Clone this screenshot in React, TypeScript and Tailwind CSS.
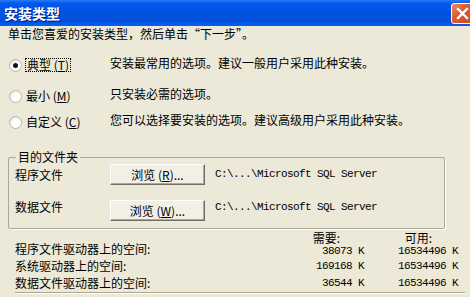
import React from "react";

function Radio({ checked }: { checked?: boolean }) {
  return (
    <div className="w-[13px] h-[13px] rounded-full border border-[#B8B8B0] bg-[radial-gradient(circle_at_65%_65%,#ffffff_40%,#DCDCD4_100%)] flex items-center justify-center shrink-0">
      {checked && <div className="w-[5px] h-[5px] rounded-full bg-[#111]" />}
    </div>
  );
}

function Btn({ children }: { children: React.ReactNode }) {
  return (
    <div className="w-[95px] h-[21px] shrink-0 border border-t-white border-l-white border-r-[#716F64] border-b-[#716F64] shadow-[inset_-1px_-1px_0_#ACA899] bg-[#F1EFE6] flex items-center justify-center text-[12px] leading-[14px]">
      {children}
    </div>
  );
}

export default function App() {
  const cjk = "font-['Noto_Sans_CJK_SC',sans-serif]";
  const mono = "font-['Liberation_Mono',monospace] text-[11px] tracking-[-0.6px]";
  return (
    <div className={`w-[470px] h-[297px] overflow-hidden bg-[#ECE9D8] text-black ${cjk} text-[12px]`}>
      {/* Title bar */}
      <div className="h-[26px] flex items-center bg-[linear-gradient(to_bottom,#2C7BF8_0%,#0058EE_12%,#0053E1_50%,#004FD8_82%,#0058EC_90%,#0064F6_100%)]">
        <div className="pl-[4px] text-white font-bold text-[14px] leading-[16px] [text-shadow:1px_1px_0_#0A1883]">
          安装类型
        </div>
        <div className="ml-auto mr-[-3px] w-[22px] h-[21px] rounded-[3px] border border-white bg-[linear-gradient(135deg,#F08A6A_0%,#E0552C_45%,#D24A20_100%)] flex items-center justify-center">
          <svg width="13" height="13" viewBox="0 0 13 13">
            <path d="M2 2 L11 11 M11 2 L2 11" stroke="white" strokeWidth="2.4" strokeLinecap="square" />
          </svg>
        </div>
      </div>

      {/* Instruction */}
      <div className="pl-[8px] leading-[14px] mt-[1px]">
        单击您喜爱的安装类型，然后单击“下一步”。
      </div>

      {/* Radio options */}
      <div className="flex flex-col">
        <div className="flex items-center h-[16px] mt-[16px]">
          <div className="w-[101px] ml-[9px] flex items-center shrink-0">
            <Radio checked />
            <div className="ml-[3px] border border-dotted border-black px-[1px] leading-[12px]">
              典型 (<u>T</u>)
            </div>
          </div>
          <div className="relative -top-[2px] leading-[14px]">安装最常用的选项。建议一般用户采用此种安装。</div>
        </div>
        <div className="flex items-center h-[16px] mt-[15px]">
          <div className="w-[101px] ml-[9px] flex items-center shrink-0">
            <Radio />
            <div className="ml-[4px] leading-[14px]">
              最小 (<u>M</u>)
            </div>
          </div>
          <div className="relative -top-[2px] leading-[14px]">只安装必需的选项。</div>
        </div>
        <div className="flex items-center h-[16px] mt-[10px]">
          <div className="w-[101px] ml-[9px] flex items-center shrink-0">
            <Radio />
            <div className="ml-[4px] leading-[14px]">
              自定义 (<u>C</u>)
            </div>
          </div>
          <div className="relative -top-[2px] leading-[14px]">您可以选择要安装的选项。建议高级用户采用此种安装。</div>
        </div>
      </div>

      {/* Group box */}
      <div className="relative ml-[8px] w-[437px] mt-[27px] border border-[#ACA899] rounded-[2px] shadow-[1px_1px_0_#ffffff] pt-[6px] pb-[7px]">
        <div className="absolute -top-[8px] left-[7px] bg-[#ECE9D8] px-[2px] leading-[14px]">目的文件夹</div>
        <div className="flex items-center h-[21px]">
          <div className="w-[101px] pl-[6px] shrink-0 leading-[14px]">程序文件</div>
          <Btn>
            浏览 (<u>R</u>)...
          </Btn>
          <div className={`ml-[10px] ${mono} leading-[12px] relative -top-[1px]`}>C:\...\Microsoft SQL Server</div>
        </div>
        <div className="flex items-center h-[21px] mt-[15px]">
          <div className="w-[101px] pl-[6px] shrink-0 leading-[14px] relative -top-[4px]">数据文件</div>
          <Btn>
            浏览 (<u>W</u>)...
          </Btn>
          <div className={`ml-[10px] ${mono} leading-[12px] relative -top-[4px]`}>C:\...\Microsoft SQL Server</div>
        </div>
      </div>

      {/* Disk space */}
      <div className="pl-[15px] pr-[12px] mt-[2px]">
        <div className="flex h-[9px] leading-[14px]">
          <div className="flex-1" />
          <div className="w-[94px] text-right pr-[24px]">需要:</div>
          <div className="w-[94px] text-right pr-[26px]">可用:</div>
        </div>
        <div className="flex h-[17px] items-center leading-[14px]">
          <div className="flex-1">程序文件驱动器上的空间:</div>
          <div className={`w-[94px] text-right ${mono} relative top-[2px]`}>38073 K</div>
          <div className={`w-[94px] text-right ${mono} relative top-[2px]`}>16534496 K</div>
        </div>
        <div className="flex h-[17px] items-center leading-[14px]">
          <div className="flex-1">系统驱动器上的空间:</div>
          <div className={`w-[94px] text-right ${mono}`}>169168 K</div>
          <div className={`w-[94px] text-right ${mono}`}>16534496 K</div>
        </div>
        <div className="flex h-[17px] items-center leading-[14px]">
          <div className="flex-1">数据文件驱动器上的空间:</div>
          <div className={`w-[94px] text-right ${mono}`}>36544 K</div>
          <div className={`w-[94px] text-right ${mono}`}>16534496 K</div>
        </div>
        <div className="mt-[1px] h-[2px] border-t border-[#ACA899] border-b border-b-white mr-[-7px]" />
      </div>
    </div>
  );
}
